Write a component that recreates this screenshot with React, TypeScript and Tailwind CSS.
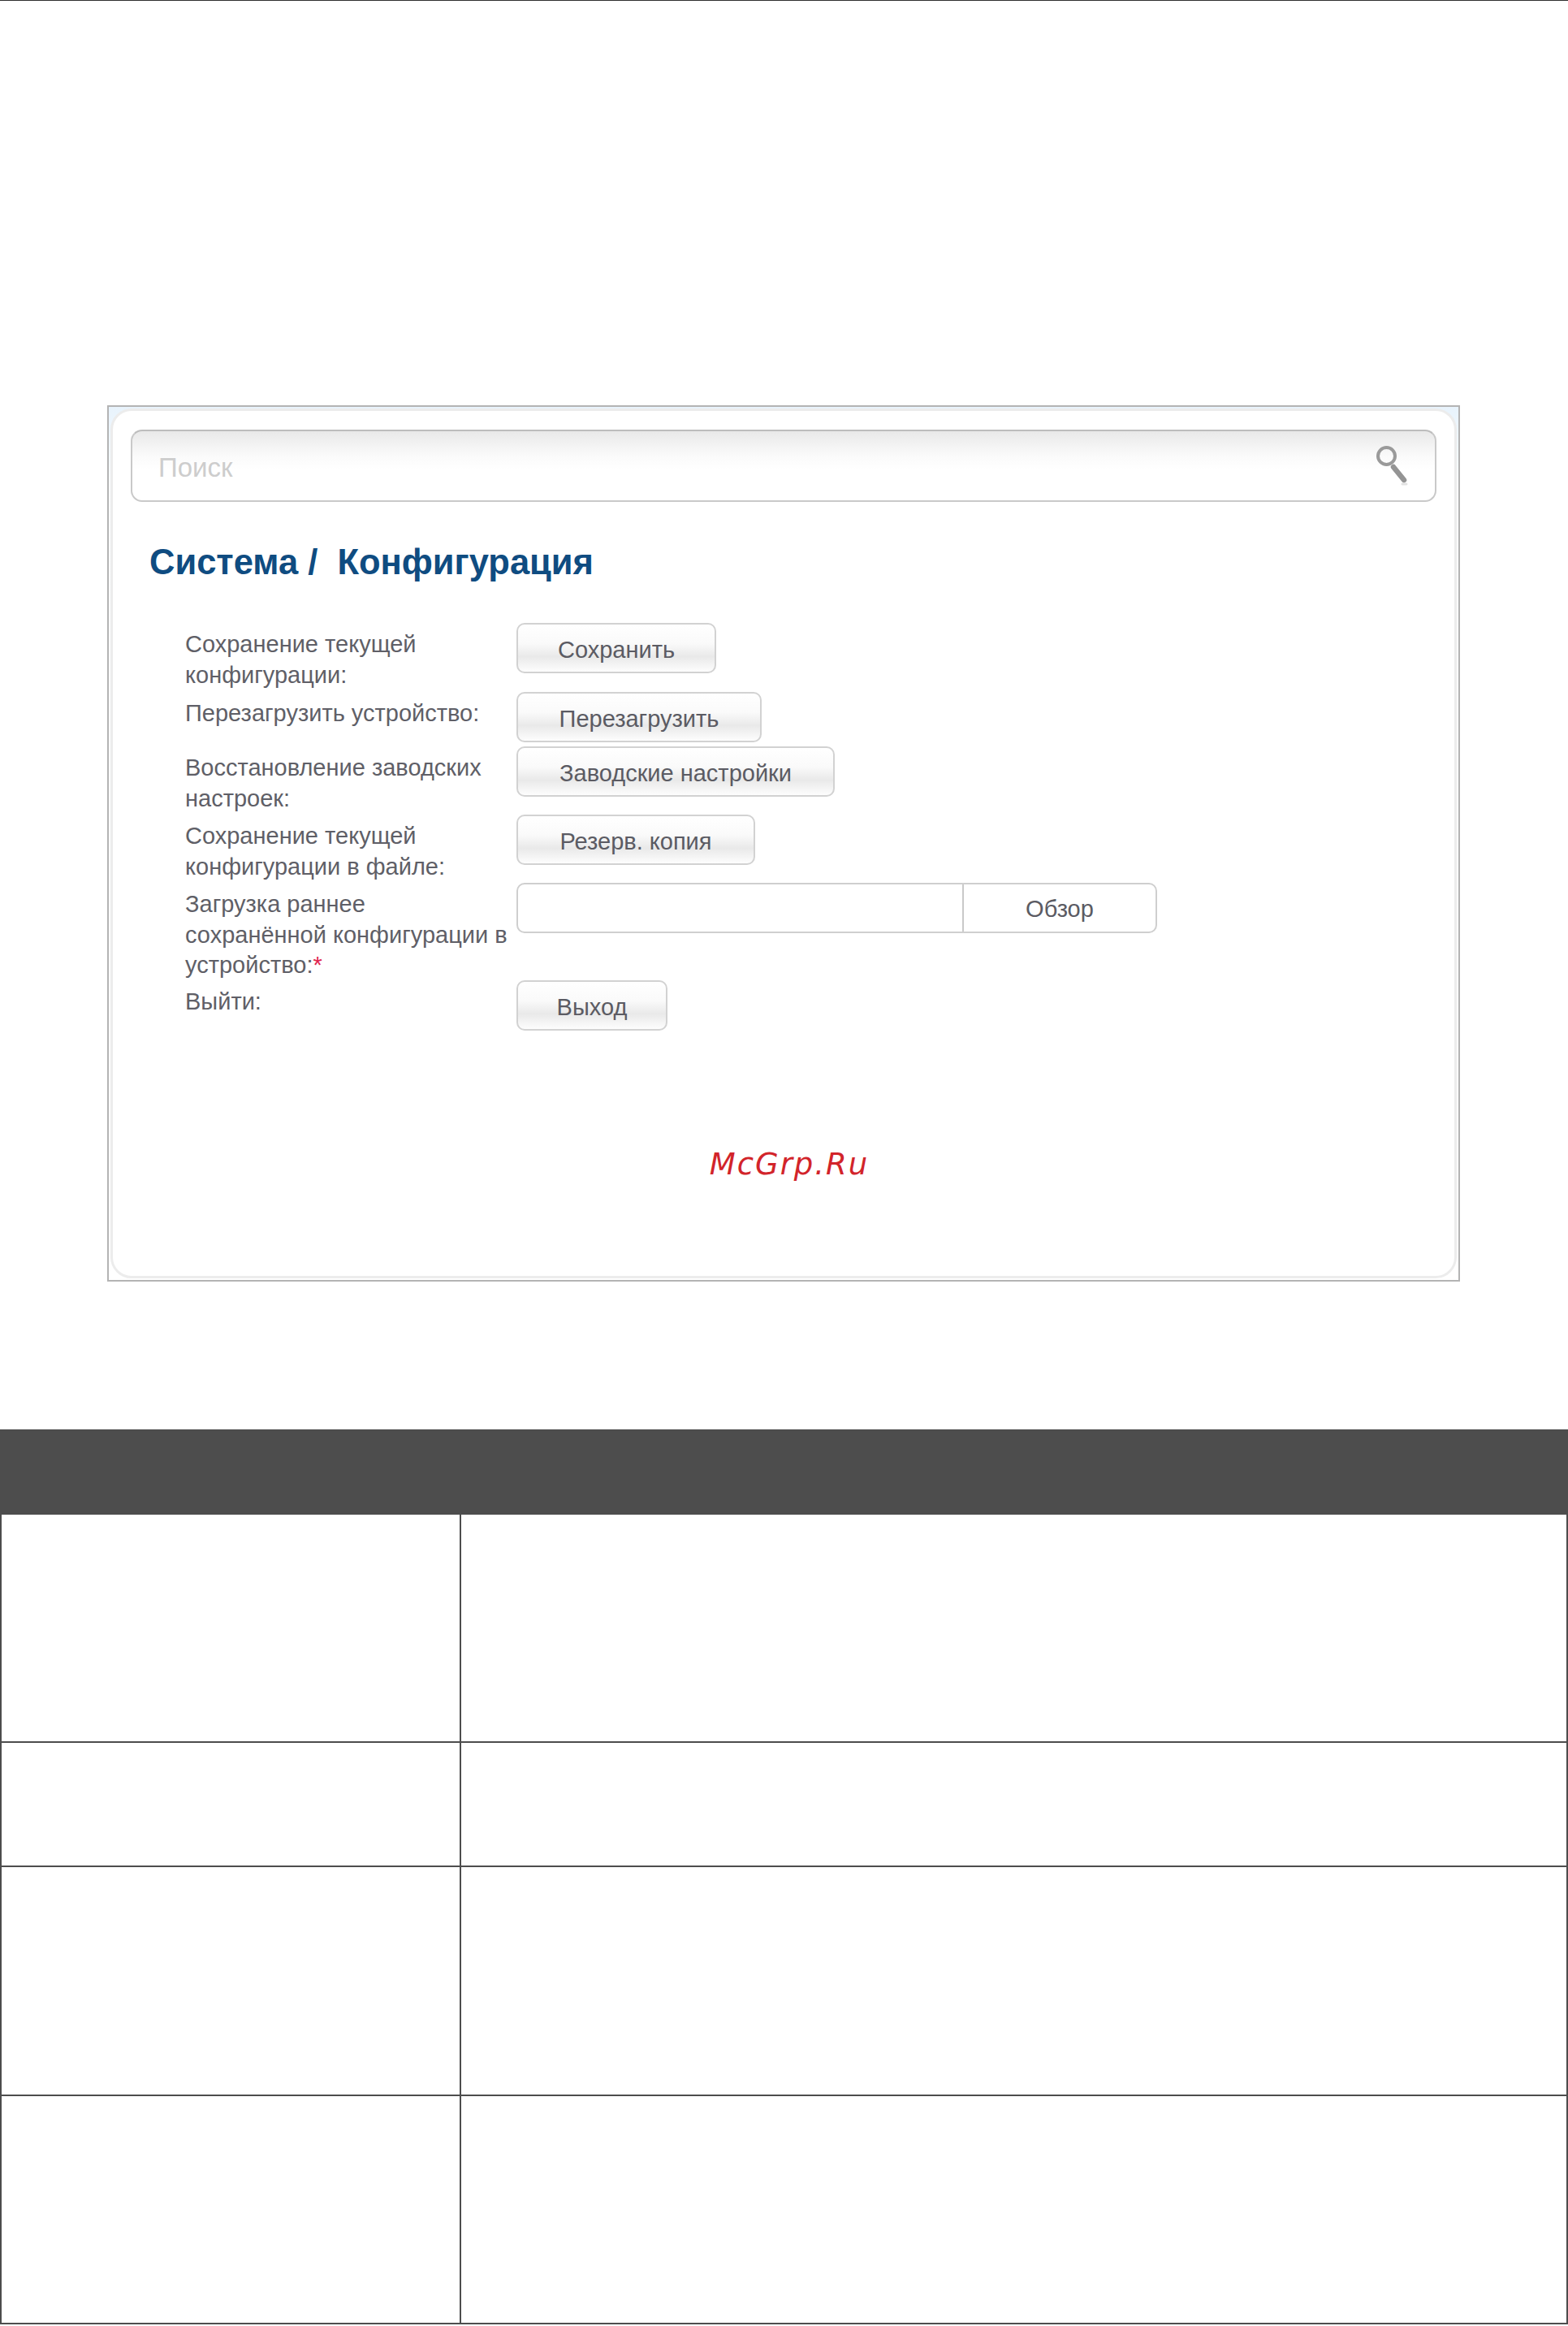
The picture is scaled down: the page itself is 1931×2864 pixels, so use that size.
const font = "font-['Liberation_Sans',Arial,sans-serif]";

const buttonClass =
  "flex h-[62px] items-center justify-center rounded-[10px] border-2 border-[#d2d2d2] bg-[linear-gradient(#ffffff_0%,#fafafa_40%,#e9e9e9_68%,#fdfdfd_100%)] pt-[6px] text-[29px] text-[#5b5b63]";

function Row({
  rowClass,
  label,
  required,
  children,
}: {
  rowClass: string;
  label: string[];
  required?: boolean;
  children: React.ReactNode;
}) {
  return (
    <div className={`flex ${rowClass}`}>
      <div className="w-[408px] shrink-0 pt-[8px] text-[29px] leading-[37.5px] text-[#5f5f67]">
        {label.map((line, i) => (
          <div key={line} className="whitespace-nowrap">
            {line}
            {required && i === label.length - 1 && <span className="text-[#e0254f]">*</span>}
          </div>
        ))}
      </div>
      {children}
    </div>
  );
}

function SearchIcon() {
  return (
    <svg width="40" height="50" viewBox="0 0 40 50" className="mt-[18px] mr-[32px]">
      <circle cx="12.5" cy="12.5" r="10.5" fill="none" stroke="#9a9a9a" strokeWidth="4" />
      <path d="M21 26 L34 42" stroke="#949494" strokeWidth="6.5" strokeLinecap="round" />
      <path d="M32 47 L37 47" stroke="#e2e2e2" strokeWidth="3" strokeLinecap="round" />
    </svg>
  );
}

function ConfigPanel() {
  return (
    <div className="ml-[132px] mt-[498px] h-[1079px] w-[1666px] border-2 border-[#b4b4b4] bg-[linear-gradient(#e8f3fc_0%,#fbfdfe_9%,#ffffff_100%)] p-[2px]">
      <div className="flex h-full flex-col rounded-[26px] border-[3px] border-[#ececec] bg-white pl-[22px] pt-[23px]">
        <div className="flex h-[89px] w-[1608px] justify-between rounded-[14px] border-2 border-[#c9c9c9] border-t-[#bdbdbd] bg-[linear-gradient(#e9e9e9_0%,#fafafa_35%,#ffffff_55%)]">
          <span className="pl-[32px] pt-[27px] text-[33px] leading-[36px] text-[#cdcdcd]">Поиск</span>
          <SearchIcon />
        </div>

        <h1 className="ml-[23px] mt-[49px] whitespace-nowrap text-[43.5px] font-bold leading-[50px] text-[#0f4c81]">
          Система /&nbsp; Конфигурация
        </h1>

        <div className="mt-[50px] ml-[67px] flex flex-col">
          <Row rowClass="h-[85px]" label={["Сохранение текущей", "конфигурации:"]}>
            <div className={`${buttonClass} w-[246px]`}>Сохранить</div>
          </Row>
          <Row rowClass="h-[67px]" label={["Перезагрузить устройство:"]}>
            <div className={`${buttonClass} w-[302px]`}>Перезагрузить</div>
          </Row>
          <Row rowClass="h-[84px]" label={["Восстановление заводских", "настроек:"]}>
            <div className={`${buttonClass} w-[392px]`}>Заводские настройки</div>
          </Row>
          <Row rowClass="h-[84px]" label={["Сохранение текущей", "конфигурации в файле:"]}>
            <div className={`${buttonClass} w-[294px]`}>Резерв. копия</div>
          </Row>
          <Row
            rowClass="h-[120px]"
            label={["Загрузка раннее", "сохранённой конфигурации в", "устройство:"]}
            required
          >
            <div className="flex h-[62px] w-[789px] rounded-[10px] border-2 border-[#cfcfcf] bg-white">
              <div className="w-[549px] border-r-2 border-[#c9c9c9]" />
              <div className="flex flex-1 items-center justify-center pt-[3px] text-[29px] text-[#5b5b63]">Обзор</div>
            </div>
          </Row>
          <Row rowClass="h-[62px]" label={["Выйти:"]}>
            <div className={`${buttonClass} w-[186px]`}>Выход</div>
          </Row>
        </div>

        <div className="mt-[143px] pr-[8px] text-center font-['DejaVu_Sans',sans-serif] text-[37px] italic leading-[44px] tracking-[2px] text-[#d2242a]">
          McGrp.Ru
        </div>
      </div>
    </div>
  );
}

function EmptyTable() {
  const rows = ["h-[281px]", "h-[153px]", "h-[282px]", "h-[281px]"];
  return (
    <div className="mt-[182px] w-[1931px]">
      <div className="h-[105px] bg-[#4d4d4d]" />
      {rows.map((h, i) => (
        <div key={i} className={`flex ${h} border-x-2 border-b-2 border-[#4d4d4d]`}>
          <div className="w-[566px] border-r-2 border-[#4d4d4d]" />
        </div>
      ))}
    </div>
  );
}

export default function App() {
  return (
    <div className={`relative h-[2864px] w-[1931px] overflow-hidden bg-white ${font}`}>
      <div className="h-px bg-[#2e2e2e]" />
      <ConfigPanel />
      <EmptyTable />
    </div>
  );
}
